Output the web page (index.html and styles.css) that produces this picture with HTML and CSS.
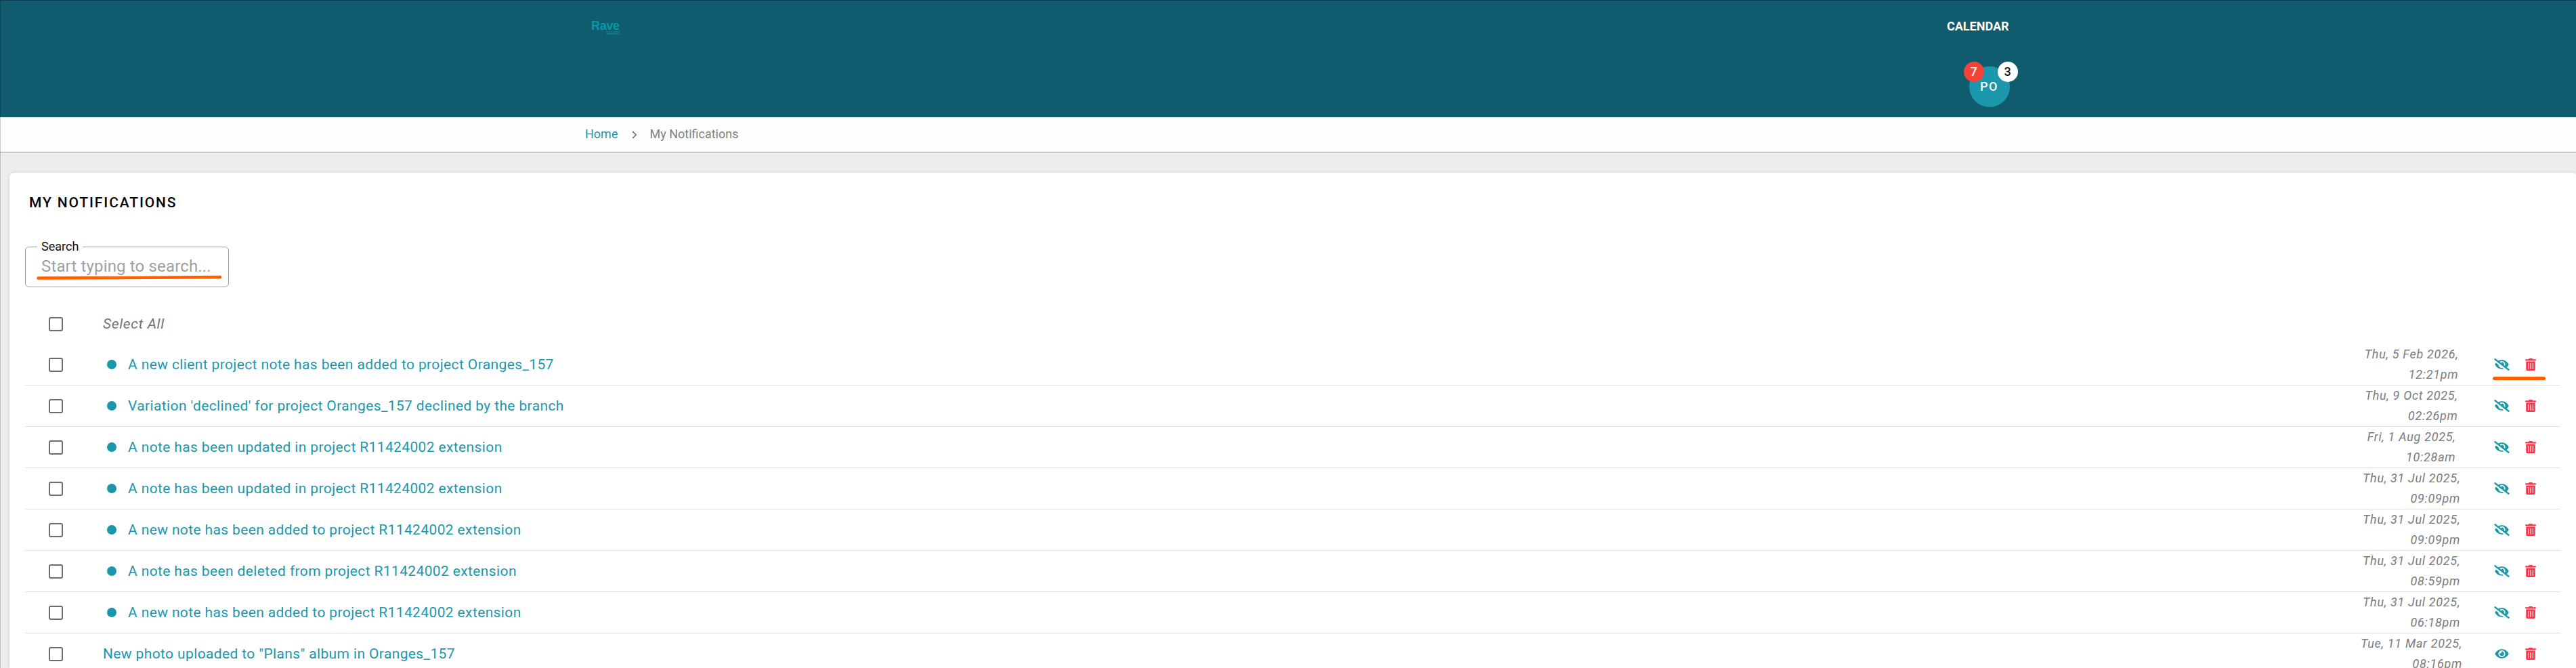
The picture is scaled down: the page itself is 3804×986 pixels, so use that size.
FILE: index.html
```html
<!DOCTYPE html>
<html lang="en">
<head>
  <meta charset="utf-8">
  <title>My Notifications</title>
  <link rel="stylesheet" href="styles.css">
</head>
<body>
  <!-- icon sprite -->
  <svg class="sprite">
    <symbol id="trash" viewBox="0 0 448 512"><path d="M32 464a48 48 0 0 0 48 48h288a48 48 0 0 0 48-48V128H32zm272-256a16 16 0 0 1 32 0v224a16 16 0 0 1-32 0zm-96 0a16 16 0 0 1 32 0v224a16 16 0 0 1-32 0zm-96 0a16 16 0 0 1 32 0v224a16 16 0 0 1-32 0zM432 32H312l-9.4-18.7A24 24 0 0 0 281.1 0H166.8a23.72 23.72 0 0 0-21.4 13.3L136 32H16A16 16 0 0 0 0 48v32a16 16 0 0 0 16 16h416a16 16 0 0 0 16-16V48a16 16 0 0 0-16-16z"/></symbol>
    <symbol id="eye" viewBox="0 0 576 512"><path d="M572.52 241.4C518.29 135.59 410.93 64 288 64S57.68 135.64 3.48 241.41a32.35 32.35 0 0 0 0 29.19C57.71 376.41 165.07 448 288 448s230.32-71.64 284.52-177.41a32.35 32.35 0 0 0 0-29.19zM288 400a144 144 0 1 1 144-144 143.93 143.93 0 0 1-144 144zm0-240a95.31 95.31 0 0 0-25.31 3.79 47.85 47.85 0 0 1-66.9 66.9A95.78 95.78 0 1 0 288 160z"/></symbol>
    <symbol id="eye-slash" viewBox="0 0 640 512"><path d="M320 400c-75.85 0-137.25-58.71-142.9-133.11L72.2 185.82c-13.79 17.3-26.48 35.59-36.72 55.59a32.35 32.35 0 0 0 0 29.19C89.71 376.41 197.07 448 320 448c26.91 0 52.87-4 77.89-10.46L346 397.39a144.13 144.13 0 0 1-26 2.61zm313.82 58.1l-110.55-85.44a331.25 331.25 0 0 0 81.25-102.07 32.35 32.35 0 0 0 0-29.19C550.29 135.59 442.93 64 320 64a308.15 308.15 0 0 0-147.32 37.7L45.46 3.37A16 16 0 0 0 23 6.18L3.37 31.45A16 16 0 0 0 6.18 53.9l588.36 454.73a16 16 0 0 0 22.46-2.81l19.64-25.27a16 16 0 0 0-2.82-22.45zm-183.72-142l-39.3-30.38A94.75 94.75 0 0 0 416 256a94.76 94.76 0 0 0-121.31-92.21A47.65 47.65 0 0 1 304 192a46.64 46.64 0 0 1-1.54 10l-73.61-56.89A142.31 142.31 0 0 1 320 112a143.92 143.92 0 0 1 144 144c0 21.63-5.29 41.79-13.9 60.11z"/></symbol>
  </svg>

  <header class="header">
    <div class="logo">
      <span class="logo-name">Rave</span>
      <svg class="logo-tag" width="20" height="5" viewBox="0 0 20 5"><path d="M0 1H20M0 4H20"/></svg>
    </div>
    <div class="header-right">
      <a class="nav-link">CALENDAR</a>
      <div class="avatar">
        PO
        <span class="badge badge-red">7</span>
        <span class="badge badge-white">3</span>
      </div>
    </div>
  </header>

  <nav class="breadcrumb">
    <a class="crumb-home">Home</a>
    <svg class="chevron" width="8" height="12" viewBox="0 0 8 12"><path d="M1.2 1.2 6.2 6 1.2 10.8"/></svg>
    <span>My Notifications</span>
  </nav>

  <main class="card">
    <h1 class="title">MY NOTIFICATIONS</h1>

    <div class="search">
      <label class="search-label" for="search">Search</label>
      <input class="search-input" id="search" type="text" placeholder="Start typing to search...">
      <svg class="search-mark" width="275" height="9" viewBox="0 0 275 9"><path d="M2.5 5.5 130 5 271 4"/></svg>
    </div>

    <div class="list">
      <div class="row row-all">
        <span class="checkbox"></span>
        <span class="select-all">Select All</span>
      </div>
      <div class="row">
        <span class="checkbox"></span>
        <a class="message unread">A new client project note has been added to project Oranges_157</a>
        <div class="date"><span>Thu, 5 Feb 2026,<br>12:21pm</span></div>
        <div class="actions marked"><svg class="icon-eye"><use href="#eye-slash"/></svg><svg class="icon-trash"><use href="#trash"/></svg></div>
      </div>
      <div class="row">
        <span class="checkbox"></span>
        <a class="message unread">Variation 'declined' for project Oranges_157 declined by the branch</a>
        <div class="date"><span>Thu, 9 Oct 2025,<br>02:26pm</span></div>
        <div class="actions"><svg class="icon-eye"><use href="#eye-slash"/></svg><svg class="icon-trash"><use href="#trash"/></svg></div>
      </div>
      <div class="row">
        <span class="checkbox"></span>
        <a class="message unread">A note has been updated in project R11424002 extension</a>
        <div class="date"><span>Fri, 1 Aug 2025,<br>10:28am</span></div>
        <div class="actions"><svg class="icon-eye"><use href="#eye-slash"/></svg><svg class="icon-trash"><use href="#trash"/></svg></div>
      </div>
      <div class="row">
        <span class="checkbox"></span>
        <a class="message unread">A note has been updated in project R11424002 extension</a>
        <div class="date"><span>Thu, 31 Jul 2025,<br>09:09pm</span></div>
        <div class="actions"><svg class="icon-eye"><use href="#eye-slash"/></svg><svg class="icon-trash"><use href="#trash"/></svg></div>
      </div>
      <div class="row">
        <span class="checkbox"></span>
        <a class="message unread">A new note has been added to project R11424002 extension</a>
        <div class="date"><span>Thu, 31 Jul 2025,<br>09:09pm</span></div>
        <div class="actions"><svg class="icon-eye"><use href="#eye-slash"/></svg><svg class="icon-trash"><use href="#trash"/></svg></div>
      </div>
      <div class="row">
        <span class="checkbox"></span>
        <a class="message unread">A note has been deleted from project R11424002 extension</a>
        <div class="date"><span>Thu, 31 Jul 2025,<br>08:59pm</span></div>
        <div class="actions"><svg class="icon-eye"><use href="#eye-slash"/></svg><svg class="icon-trash"><use href="#trash"/></svg></div>
      </div>
      <div class="row">
        <span class="checkbox"></span>
        <a class="message unread">A new note has been added to project R11424002 extension</a>
        <div class="date"><span>Thu, 31 Jul 2025,<br>06:18pm</span></div>
        <div class="actions"><svg class="icon-eye"><use href="#eye-slash"/></svg><svg class="icon-trash"><use href="#trash"/></svg></div>
      </div>
      <div class="row">
        <span class="checkbox"></span>
        <a class="message">New photo uploaded to "Plans" album in Oranges_157</a>
        <div class="date"><span>Tue, 11 Mar 2025,<br>08:16pm</span></div>
        <div class="actions"><svg class="icon-eye"><use href="#eye"/></svg><svg class="icon-trash"><use href="#trash"/></svg></div>
      </div>
    </div>
  </main>
</body>
</html>
```
FILE: styles.css
```css
* {
  box-sizing: border-box;
}

body {
  margin: 0;
  height: 986px;
  overflow: hidden;
  background: #eeeeee;
  font-family: Roboto, sans-serif;
  font-size: 21px;
}

/* thin window edge over the whole page */
body::before {
  content: "";
  position: fixed;
  inset: 0;
  z-index: 5;
  border-left: 1px solid rgba(0, 0, 0, 0.2);
  border-top: 1px solid rgba(0, 0, 0, 0.3);
  pointer-events: none;
}

.sprite {
  display: none;
}

/* Header */
.header {
  display: grid;
  grid-template-columns: 2002px auto;
  height: 173px;
  padding: 27px 0 0 873px;
  background: #115b6e;
}

.logo {
  width: 44px;
}

.logo-name {
  display: block;
  font: bold 18px/22px "Liberation Sans", sans-serif;
  letter-spacing: -0.3px;
  color: #0798aa;
}

.logo-tag {
  display: block;
  margin: -3px 0 0 22px;
  fill: none;
  stroke: #0b8496;
  stroke-width: 1.4;
  stroke-dasharray: 3 0.6;
}

.header-right {
  color: #fff;
}

.nav-link {
  display: block;
  font-size: 18px;
  font-weight: 700;
  line-height: 24px;
}

.avatar {
  position: relative;
  width: 60px;
  height: 60px;
  margin: 47px 0 0 32.5px;
  border-radius: 50%;
  background: #1b97ac;
  font-size: 18px;
  font-weight: 500;
  letter-spacing: 1.6px;
  line-height: 60px;
  text-align: center;
}

.badge {
  position: absolute;
  top: -7px;
  width: 30px;
  height: 30px;
  border-radius: 50%;
  letter-spacing: 0;
  line-height: 30px;
}

.badge-red {
  left: -8px;
  background: #f44336;
}

.badge-white {
  right: -12px;
  background: #fff;
  color: #111;
}

/* Breadcrumb */
.breadcrumb {
  display: flex;
  align-items: center;
  height: 52px;
  padding: 0 0 2px 864px;
  border-bottom: 1px solid #8f8f8f;
  background: #fdfdfd;
  color: #808080;
  font-size: 18px;
}

.crumb-home {
  color: #1b97ac;
}

.chevron {
  margin: 3px 18px 0 21px;
  fill: none;
  stroke: #6e6e6e;
  stroke-width: 1.6;
}

/* Card */
.card {
  height: 731px;
  overflow: hidden;
  margin: 30px -1px 0 14px;
  padding: 28px 24px 0 23px;
  border-radius: 6px 6px 0 0;
  background: #fff;
  box-shadow: 0 0 5px rgba(0, 0, 0, 0.14);
}

.title {
  margin: 0 0 49px 6px;
  font-size: 21px;
  font-weight: 500;
  letter-spacing: 1.875px;
  line-height: 32px;
  color: #000;
}

.search {
  position: relative;
  width: 301px;
  height: 60px;
  padding: 10px 25px 0;
  border: 1px solid #9e9e9e;
  border-radius: 6px;
}

.search-label {
  position: absolute;
  top: -13px;
  left: 17px;
  padding: 0 6px;
  background: #fff;
  color: #111;
  font-size: 18px;
  line-height: 24px;
}

.search-input {
  display: block;
  width: 250px;
  height: 36px;
  margin-left: -2px;
  padding: 0;
  border: none;
  outline: none;
  background: none;
  font: 24px/36px Roboto, sans-serif;
  letter-spacing: 0.15px;
}

.search-input::placeholder {
  color: #a0a0a0;
}

/* hand drawn underline */
.search-mark {
  position: absolute;
  top: 40px;
  left: 16px;
  fill: none;
  stroke: #ff5f00;
  stroke-width: 4.6;
  stroke-linecap: round;
}

/* Notification list */
.list {
  margin-top: 24px;
}

.row {
  display: flex;
  align-items: center;
  height: 61px;
  border-bottom: 1px solid #e0e0e0;
}

.row-all {
  height: 60px;
  border-bottom: none;
}

.checkbox {
  width: 21px;
  height: 21px;
  margin: 0 59px 0 35px;
  border: 2px solid #6c6c6c;
  border-radius: 3px;
}

.select-all {
  color: #757575;
  font-style: italic;
  letter-spacing: 0.65px;
}

.message {
  flex: 1;
  color: #1b97ac;
  letter-spacing: 0.375px;
}

.unread::before {
  content: "";
  display: inline-block;
  width: 14px;
  height: 14px;
  margin: 0 17px 0 6px;
  border-radius: 50%;
  background: #1b97ac;
}

.date {
  display: flex;
  justify-content: center;
  width: 160px;
  color: #7b7b7b;
  font-size: 18px;
  font-style: italic;
  letter-spacing: 0.7px;
  line-height: 30px;
  text-align: right;
}

.actions {
  position: relative;
  display: flex;
  align-items: center;
  justify-content: space-between;
  width: 62px;
  margin: 0 36px 0 42px;
}

.marked::after {
  content: "";
  position: absolute;
  top: 27px;
  left: -2px;
  width: 78px;
  height: 5px;
  border-radius: 3px;
  background: #ff5f00;
}

.icon-eye {
  width: 23px;
  height: 18px;
  fill: #1b97ac;
}

.icon-trash {
  width: 16px;
  height: 18px;
  fill: #fb344b;
}
```
